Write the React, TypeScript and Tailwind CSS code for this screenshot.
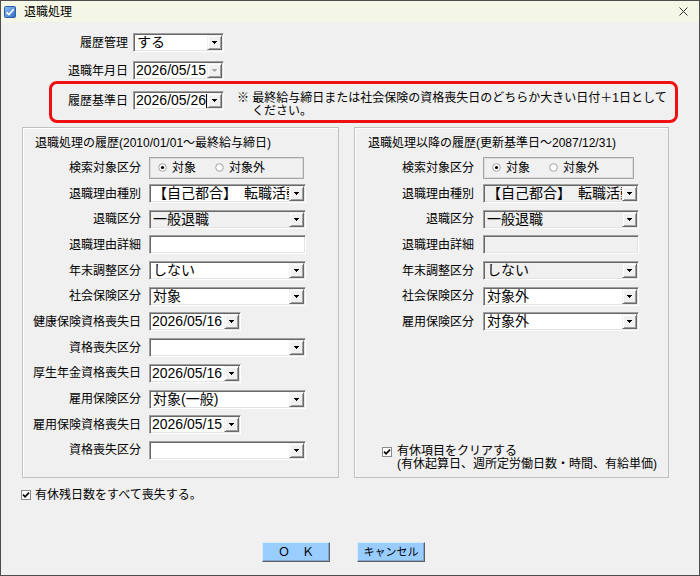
import React from 'react';

function Arrow({ disabled }: { disabled?: boolean }) {
  const c = disabled ? '#a8a8a8' : '#000000';
  return (
    <svg width="5" height="3" viewBox="0 0 5 3" shapeRendering="crispEdges">
      <rect x="0" y="0" width="5" height="1" fill={c} />
      <rect x="1" y="1" width="3" height="1" fill={c} />
      <rect x="2" y="2" width="1" height="1" fill={c} />
    </svg>
  );
}

function DropButton({ disabled }: { disabled?: boolean }) {
  return (
    <div className="w-[15px] shrink-0 self-stretch flex items-center justify-center bg-[#f0f0f0] border border-t-[#f0f0f0] border-l-[#f0f0f0] border-r-[#696969] border-b-[#696969] shadow-[inset_1px_1px_0_#ffffff,inset_-1px_-1px_0_#a0a0a0]">
      <Arrow disabled={disabled} />
    </div>
  );
}

function Field({ className, grey, children }: { className: string; grey?: boolean; children?: React.ReactNode }) {
  return (
    <div
      className={`${className} flex items-stretch p-px border border-t-[#a0a0a0] border-l-[#a0a0a0] border-r-white border-b-white shadow-[inset_1px_1px_0_#696969,inset_-1px_-1px_0_#e3e3e3] ${grey ? 'bg-[#f0f0f0]' : 'bg-white'}`}
    >
      {children}
    </div>
  );
}

function Select({ className, value, grey }: { className: string; value?: string; grey?: boolean }) {
  return (
    <Field className={className} grey={grey}>
      <div className="flex-1 min-w-0 overflow-hidden whitespace-nowrap text-[14px] leading-[15px] pl-[2px] flex items-center">
        {value}
      </div>
      <DropButton />
    </Field>
  );
}

function DateBox({ className, value, cursor, disabled }: { className: string; value: string; cursor?: boolean; disabled?: boolean }) {
  return (
    <Field className={className}>
      <div className="flex-1 min-w-0 overflow-hidden whitespace-nowrap text-[14px] leading-[15px] pl-[1px] flex items-center">
        {value}
        {cursor && <span className="inline-block w-[2px] h-[14px] bg-black shrink-0" />}
      </div>
      <DropButton disabled={disabled} />
    </Field>
  );
}

function Radio({ on }: { on?: boolean }) {
  return (
    <svg width="9" height="9" viewBox="0 0 9 9">
      <circle cx="4.5" cy="4.5" r="3.8" fill="#ffffff" stroke="#a0a0a0" strokeWidth="1" />
      {on && <circle cx="4.5" cy="4.5" r="1.6" fill="#000000" />}
    </svg>
  );
}

function Radios({ className }: { className: string }) {
  return (
    <div className={`${className} h-[22px] border border-[#a6a6a6] shadow-[inset_0_0_0_1px_#dadada] flex items-center pl-[8px]`}>
      <Radio on />
      <span className="ml-[5px]">対象</span>
      <span className="ml-[19px] flex items-center">
        <Radio />
      </span>
      <span className="ml-[5px]">対象外</span>
    </div>
  );
}

function Check() {
  return (
    <svg width="10" height="10" viewBox="0 0 10 10" className="shrink-0">
      <rect x="0.5" y="0.5" width="9" height="9" fill="#ffffff" stroke="#8a8a8a" shapeRendering="crispEdges" />
      <path d="M2 4.6 L4.1 6.8 L8 2.6" fill="none" stroke="#000000" strokeWidth="1.6" />
    </svg>
  );
}

function LeftRow({ label, children }: { label: string; children: React.ReactNode }) {
  return (
    <div className="h-[25.7px] flex items-center">
      <div className="w-[118px] text-right whitespace-nowrap">{label}</div>
      <div className="ml-[8px]">{children}</div>
    </div>
  );
}

function RightRow({ label, children }: { label: string; children: React.ReactNode }) {
  return (
    <div className="h-[25.7px] flex items-center">
      <div className="w-[119px] text-right whitespace-nowrap">{label}</div>
      <div className="ml-[9px]">{children}</div>
    </div>
  );
}

export default function App() {
  return (
    <div className="w-[700px] h-[576px] bg-[#f0f0f0] border border-[#4d4d4d] flex flex-col overflow-hidden text-black text-[12px] leading-[12px] font-['Liberation_Sans','Noto_Sans_CJK_JP',sans-serif]">
      {/* title bar */}
      <div className="h-[21px] shrink-0 bg-[#f4f7e5] flex items-center pl-[3px] pr-[11px]">
        <svg width="12" height="12" viewBox="0 0 12 12">
          <defs>
            <linearGradient id="ic" x1="0" y1="0" x2="1" y2="1">
              <stop offset="0" stopColor="#8fc0f2" />
              <stop offset="1" stopColor="#2e6cc0" />
            </linearGradient>
          </defs>
          <rect x="0.5" y="0.5" width="11" height="11" rx="1" fill="url(#ic)" stroke="#2a5fa8" />
          <path d="M2.6 6.3 L5 8.6 L9.6 3.2" fill="none" stroke="#ffffff" strokeWidth="1.7" />
        </svg>
        <span className="ml-[8px]">退職処理</span>
        <svg width="9" height="9" viewBox="0 0 9 9" className="ml-auto">
          <path d="M0.5 0.5 L8.5 8.5 M8.5 0.5 L0.5 8.5" stroke="#333333" strokeWidth="1" />
        </svg>
      </div>

      {/* top fields */}
      <div className="pt-[11px] flex flex-col">
        <div className="flex items-center h-[19px]">
          <div className="w-[127px] text-right">履歴管理</div>
          <Select className="ml-[5px] w-[91px] h-[19px]" value="する" />
        </div>
        <div className="flex items-center h-[19px] mt-[9px]">
          <div className="w-[127px] text-right">退職年月日</div>
          <DateBox className="ml-[5px] w-[91px] h-[19px]" value="2026/05/15" disabled />
        </div>
        <div className="ml-[48px] mt-[1px] w-[629px] h-[42px] border-[3px] border-[#ee1111] rounded-[8px] flex items-start pt-[7px]">
          <div className="w-[76px] h-[19px] flex items-center justify-end">履歴基準日</div>
          <DateBox className="ml-[5px] w-[91px] h-[19px]" value="2026/05/26" cursor />
          <div className="ml-[13px] mt-[1px] whitespace-nowrap leading-[13px]">
            <div>※ 最終給与締日または社会保険の資格喪失日のどちらか大きい日付＋1日として</div>
            <div className="pl-[15px]">ください。</div>
          </div>
        </div>
      </div>

      {/* group boxes */}
      <div className="mt-[4px] pl-[21px] flex gap-[15px]">
        <div className="w-[317px] h-[351px] border border-[#c0c0c0] shadow-[inset_1px_1px_0_#ffffff] flex flex-col pt-[9px]">
          <div className="pl-[12px] whitespace-nowrap">退職処理の履歴(2010/01/01～最終給与締日)</div>
          <div className="mt-[6px] flex flex-col">
            <LeftRow label="検索対象区分">
              <Radios className="w-[155px]" />
            </LeftRow>
            <LeftRow label="退職理由種別">
              <Select className="w-[157px] h-[19px]" value="【自己都合】　転職活動のため" />
            </LeftRow>
            <LeftRow label="退職区分">
              <Select className="w-[157px] h-[19px]" value="一般退職" grey />
            </LeftRow>
            <LeftRow label="退職理由詳細">
              <Field className="w-[157px] h-[19px]" />
            </LeftRow>
            <LeftRow label="年末調整区分">
              <Select className="w-[157px] h-[19px]" value="しない" />
            </LeftRow>
            <LeftRow label="社会保険区分">
              <Select className="w-[157px] h-[19px]" value="対象" />
            </LeftRow>
            <LeftRow label="健康保険資格喪失日">
              <DateBox className="w-[92px] h-[19px]" value="2026/05/16" />
            </LeftRow>
            <LeftRow label="資格喪失区分">
              <Select className="w-[157px] h-[19px]" value="" />
            </LeftRow>
            <LeftRow label="厚生年金資格喪失日">
              <DateBox className="w-[92px] h-[19px]" value="2026/05/16" />
            </LeftRow>
            <LeftRow label="雇用保険区分">
              <Select className="w-[157px] h-[19px]" value="対象(一般)" />
            </LeftRow>
            <LeftRow label="雇用保険資格喪失日">
              <DateBox className="w-[92px] h-[19px]" value="2026/05/15" />
            </LeftRow>
            <LeftRow label="資格喪失区分">
              <Select className="w-[157px] h-[19px]" value="" />
            </LeftRow>
          </div>
        </div>

        <div className="w-[315px] h-[351px] border border-[#c0c0c0] shadow-[inset_1px_1px_0_#ffffff] flex flex-col pt-[9px] pb-[6px]">
          <div className="pl-[13px] whitespace-nowrap">退職処理以降の履歴(更新基準日～2087/12/31)</div>
          <div className="mt-[6px] flex flex-col">
            <RightRow label="検索対象区分">
              <Radios className="w-[151px]" />
            </RightRow>
            <RightRow label="退職理由種別">
              <Select className="w-[156px] h-[19px]" value="【自己都合】　転職活動のため" grey />
            </RightRow>
            <RightRow label="退職区分">
              <Select className="w-[156px] h-[19px]" value="一般退職" grey />
            </RightRow>
            <RightRow label="退職理由詳細">
              <Field className="w-[156px] h-[19px]" grey />
            </RightRow>
            <RightRow label="年末調整区分">
              <Select className="w-[156px] h-[19px]" value="しない" grey />
            </RightRow>
            <RightRow label="社会保険区分">
              <Select className="w-[156px] h-[19px]" value="対象外" />
            </RightRow>
            <RightRow label="雇用保険区分">
              <Select className="w-[156px] h-[19px]" value="対象外" />
            </RightRow>
          </div>
          <div className="mt-auto pl-[27px] flex items-start">
            <div className="mt-[2px]">
              <Check />
            </div>
            <div className="ml-[5px] whitespace-nowrap leading-[13px]">
              <div>有休項目をクリアする</div>
              <div>(有休起算日、週所定労働日数・時間、有給単価)</div>
            </div>
          </div>
        </div>
      </div>

      {/* bottom checkbox */}
      <div className="mt-[11px] pl-[20px] h-[12px] flex items-center">
        <Check />
        <span className="ml-[4px]">有休残日数をすべて喪失する。</span>
      </div>

      {/* buttons */}
      <div className="mt-[41px] pl-[261px] flex gap-[27px]">
        <button className="w-[68px] h-[20px] bg-[#99ccff] border border-t-[#d8ecff] border-l-[#d8ecff] border-r-[#5f5f5f] border-b-[#5f5f5f] shadow-[inset_-1px_-1px_0_#7ea6cf] text-[12px] leading-[12px]">
          Ｏ　Ｋ
        </button>
        <button className="w-[68px] h-[20px] bg-[#99ccff] border border-t-[#d8ecff] border-l-[#d8ecff] border-r-[#5f5f5f] border-b-[#5f5f5f] shadow-[inset_-1px_-1px_0_#7ea6cf] text-[11px] leading-[12px]">
          キャンセル
        </button>
      </div>
    </div>
  );
}
